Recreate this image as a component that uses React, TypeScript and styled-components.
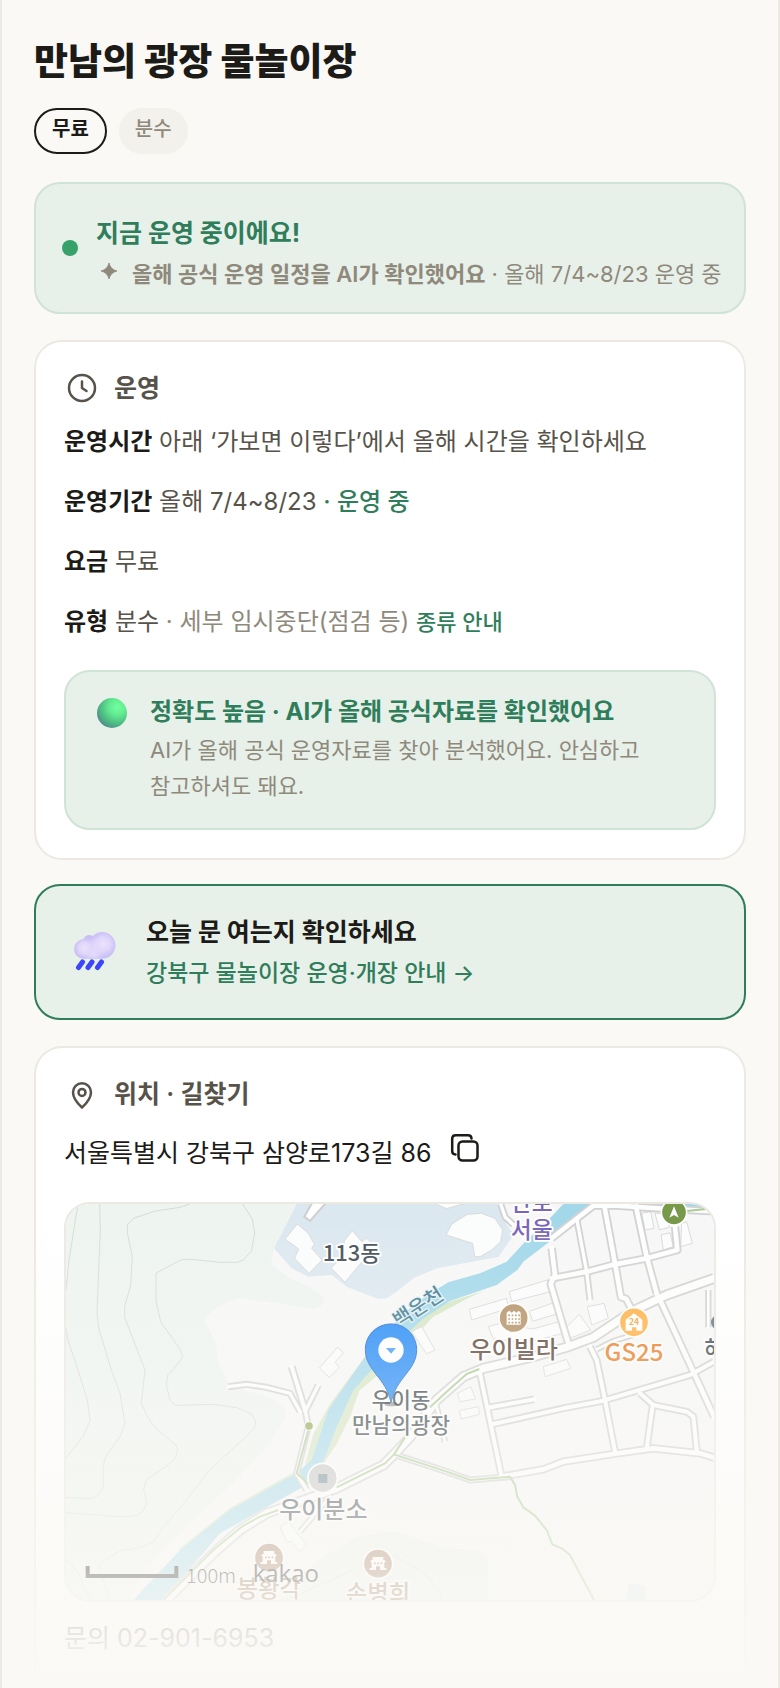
import React from "react";
import styled, { createGlobalStyle, css } from "styled-components";

const color = {
  page: "#faf9f5",
  line: "#ebe9e2",
  card: "#ffffff",
  ink: "#1c1b18",
  body: "#57534a",
  muted: "#8f897c",
  green: "#2f7d5b",
  mint: "#e8f0ea",
  mintLine: "#cfe3d7",
};

const GlobalStyle = createGlobalStyle`
  *, *::before, *::after { box-sizing: border-box; }
  body {
    margin: 0;
    background: ${color.page};
    color: ${color.ink};
    font-family: Inter, "Noto Sans CJK KR", sans-serif;
    font-size: 25px;
    line-height: 40px;
    word-break: keep-all;
  }
  h1, h2, p { margin: 0; font-weight: inherit; font-size: inherit; }
  a { color: inherit; text-decoration: none; }
`;

const Page = styled.main`
  position: relative;
  display: flex;
  flex-direction: column;
  min-height: 100vh;
  padding: 36px 32px 0;
  border: solid ${color.line};
  border-width: 0 2px;
  overflow: hidden;
`;

const Title = styled.h1`
  font-size: 37px;
  font-weight: 800;
  line-height: 52px;
`;

const Tags = styled.div`
  display: flex;
  gap: 12px;
  margin: 20px 0 28px;
`;

const Tag = styled.span<{ $outlined?: boolean }>`
  display: flex;
  align-items: center;
  height: 46px;
  padding: 0 16px 4px;
  border-radius: 23px;
  font-size: 20px;
  font-weight: 500;
  color: ${color.muted};
  background: #f2f1ec;
  ${(p) =>
    p.$outlined &&
    css`
      border: 2px solid ${color.ink};
      background: transparent;
      color: ${color.ink};
      font-weight: 600;
    `}
`;

const panel = css`
  border: 2px solid ${color.mintLine};
  border-radius: 26px;
  background: ${color.mint};
`;

const Status = styled.section`
  ${panel}
  display: flex;
  align-items: center;
  gap: 18px;
  padding: 18px 16px 18px 26px;
`;

const StatusText = styled.div`
  padding-top: 10px;
`;

const StatusDot = styled.span`
  flex: none;
  width: 16px;
  height: 16px;
  border-radius: 50%;
  background: #36a269;
`;

const PanelTitle = styled.h2<{ $tone?: string; $compact?: boolean }>`
  font-size: ${(p) => (p.$compact ? 24 : 25)}px;
  font-weight: 700;
  line-height: ${(p) => (p.$compact ? 36 : 42)}px;
  color: ${(p) => p.$tone ?? color.green};
`;

const Note = styled.p`
  display: flex;
  align-items: center;
  font-size: 22px;
  line-height: 40px;
  color: ${color.muted};

  svg { flex: none; margin: 0 13px 6px 3px; }
  strong { font-weight: 600; }
`;

const Card = styled.section<{ $open?: boolean }>`
  padding: 28px;
  border: 2px solid ${color.line};
  border-radius: 28px;
  background: ${color.card};
  margin-top: 26px;
  ${(p) =>
    p.$open &&
    css`
      flex: 1;
      padding-bottom: 0;
      border-bottom: 0;
      border-radius: 28px 28px 0 0;
    `}
`;

const CardHeading = styled.h2`
  display: flex;
  align-items: center;
  gap: 14px;
  height: 36px;
  margin-bottom: 16px;
  font-weight: 600;
  color: ${color.body};
`;

const Facts = styled.div`
  display: grid;
  gap: 20px;
  font-size: 24px;
  color: ${color.body};
`;

const Fact = styled.p`
  strong { font-weight: 700; color: ${color.ink}; }
  em { font-style: normal; color: ${color.muted}; }
  mark { background: none; color: ${color.green}; font-weight: 500; }
  a { font-size: 22px; font-weight: 500; color: ${color.green}; }
`;

const Callout = styled.div`
  ${panel}
  display: flex;
  gap: 20px;
  margin-top: 28px;
  padding: 22px 28px 24px;

  svg { flex: none; }
`;

const CalloutText = styled.p`
  margin-top: 2px;
  font-size: 22px;
  line-height: 36px;
  color: ${color.muted};
`;

const CheckLink = styled.a`
  ${panel}
  display: flex;
  align-items: center;
  gap: 26px;
  min-height: 136px;
  margin-top: 24px;
  padding: 24px 34px;
  border-color: ${color.green};
`;

const LinkLine = styled.span`
  display: block;
  font-size: 23px;
  font-weight: 500;
  line-height: 40px;
  color: ${color.green};
`;

const Address = styled.div`
  display: flex;
  align-items: flex-start;
  gap: 14px;
  line-height: 50px;
`;

const IconButton = styled.button`
  display: flex;
  align-items: center;
  justify-content: center;
  width: 40px;
  height: 40px;
  padding: 0;
  border: 0;
  background: none;
  color: ${color.ink};
  cursor: pointer;
`;

const MapFrame = styled.div`
  height: 400px;
  margin: 24px 0 16px;
  border: 2px solid ${color.line};
  border-radius: 26px;
  overflow: hidden;

  svg { display: block; width: 100%; height: 100%; }
`;

const Contact = styled.p`
  color: ${color.body};
`;

const Fade = styled.div`
  position: absolute;
  inset: auto -2px 0;
  height: 468px;
  background: linear-gradient(to bottom, rgba(250, 249, 245, 0), ${color.page});
  pointer-events: none;
`;

const Sparkle = () => (
  <svg width="20" height="20" viewBox="0 0 20 20" aria-hidden="true">
    <path
      d="M10 2 Q11.500 8.500 18 10 Q11.500 11.500 10 18 Q8.500 11.500 2 10 Q8.500 8.500 10 2Z"
      fill={color.muted}
      stroke={color.muted}
      strokeWidth="0.800"
    />
  </svg>
);

const stroke = {
  fill: "none",
  stroke: "currentColor",
  strokeWidth: 2.5,
  strokeLinecap: "round",
  strokeLinejoin: "round",
} as const;

const ClockIcon = () => (
  <svg width="36" height="36" viewBox="0 0 36 36" aria-hidden="true" {...stroke}>
    <circle cx="18" cy="18" r="13" />
    <path d="M18 11.5V18l4.5 3" />
  </svg>
);

const PinIcon = () => (
  <svg width="36" height="36" viewBox="0 0 36 36" aria-hidden="true" {...stroke}>
    <path d="M27 16.2c0 5.800-5 11.600-9 15.300-4-3.700-9-9.500-9-15.300a9 9 0 0 1 18 0Z" />
    <circle cx="18" cy="16.400" r="3.500" />
  </svg>
);

const CopyIcon = () => (
  <svg width="30" height="30" viewBox="0 0 30 30" aria-hidden="true" {...stroke}>
    <rect x="8.500" y="8.500" width="19" height="19" rx="4" />
    <path d="M5.500 21.500a3.500 3.500 0 0 1-3.300-3.500V5.500A3.500 3.500 0 0 1 5.700 2.200H18a3.500 3.500 0 0 1 3.500 3.300" />
  </svg>
);

const GreenBall = () => (
  <svg width="36" height="36" viewBox="0 0 36 36" aria-hidden="true">
    <defs>
      <radialGradient id="ball" cx="0.68" cy="0.3" r="0.8">
        <stop offset="0" stopColor="#72ff9f" />
        <stop offset="0.350" stopColor="#62ea90" />
        <stop offset="0.700" stopColor="#4cbb82" />
        <stop offset="1" stopColor="#50858f" />
      </radialGradient>
    </defs>
    <circle cx="18" cy="19" r="15" fill="url(#ball)" />
  </svg>
);

const RainCloud = () => (
  <svg width="50" height="44" viewBox="0 0 50 44" aria-hidden="true">
    <defs>
      <radialGradient id="glow">
        <stop offset="0" stopColor="#ebe3fb" />
        <stop offset="0.500" stopColor="#e2d9fa" stopOpacity="0.900" />
        <stop offset="1" stopColor="#d5cbf8" stopOpacity="0" />
      </radialGradient>
      <clipPath id="cloud">
        <circle cx="19.500" cy="11.500" r="6.500" />
        <circle cx="13.800" cy="19" r="9.800" />
        <circle cx="32.200" cy="15.300" r="13.300" />
        <path d="M13.800 14H32.200V28.700H13.800Z" />
      </clipPath>
    </defs>
    <g clipPath="url(#cloud)">
      <rect width="50" height="30" fill="#c8bff5" />
      <circle cx="23" cy="20" r="13" fill="url(#glow)" />
      <circle cx="14" cy="18" r="11" fill="url(#glow)" />
      <circle cx="33.500" cy="14" r="14" fill="url(#glow)" />
    </g>
    <g stroke="#3d45fb" strokeWidth="5" strokeLinecap="round">
      <path d="M12.500 32 8.500 37.500M22 32 18 37.500M31.500 32 27.500 37.500" />
    </g>
  </svg>
);

const contours = [
  "M36 0 9 168 0 258",
  "M101 0 103 78 93 323 98 373 136 498 162 568 177 660 162 698 120 756 112 783 112 848 92 878 72 885 0 880",
  "M0 373 6 408 36 498 64 588 72 650 52 696 0 762",
  "M372 0 342 10 268 21 202 43 184 63 184 86 199 158 194 243 176 308 176 340 237 498 226 598 247 643 272 676 330 723 335 738 330 760 302 786 242 826 233 853 242 896 232 920 210 934 172 939 0 926",
  "M530 0 559 45 566 88 556 142 532 168 514 175 462 175 377 166 347 167 270 207 270 290 284 353 342 436 351 458 322 496 305 513 301 543 312 588 327 604 442 601 512 611 557 630 569 651 566 671 542 696 434 795 347 906 292 968 262 1013 227 1030 162 1040 97 1081 132 1188",
  "M0 1066 37 1108 72 1188",
  "M982 1053 1077 1108 1122 1163 1127 1188M862 1098 662 1188",
];

const buildings = [
  "694 60 727 88 745 121 737 133 768 168 729 208 686 163 698 135 657 105",
  "859 80 887 113 902 103 930 130 877 186 837 235 795 191 830 160 835 110",
  "1140 93 1157 60 1204 31 1247 28 1287 43 1310 78 1304 113 1277 138 1242 158 1226 158 1220 118",
  "1097 -5 1142 14 1207 -5",
  "1210 316 1322 283 1327 313 1217 348",
  "1330 263 1444 228 1454 263 1337 293",
  "1390 322 1464 296 1472 330 1400 352",
  "1267 368 1304 358 1400 375 1482 352 1492 388 1380 416 1282 404",
  "1540 331 1574 378 1512 403 1502 368",
  "1564 308 1614 298 1627 343 1577 363",
  "1037 383 1067 368 1107 438 1082 450",
  "1432 488 1502 466 1514 493 1437 518",
  "1174 568 1214 548 1229 585 1182 593",
  "1180 620 1237 608 1240 631 1185 645",
  "1727 28 1754 23 1764 73 1737 78",
  "1767 28 1800 28 1810 70 1780 78",
  "1785 93 1812 86 1822 128 1792 138",
  "1847 58 1862 53 1879 118 1844 128",
  "814 430 832 446 807 475 820 490 790 520 760 492",
  "667 953 722 1023 700 1043 677 1013 662 1013 642 968",
];

const roads: { d: string; w: number }[] = [
  { d: "M1304 0 1318 40 1342 62", w: 10 },
  { d: "M1457 103 1582 5 1640 4 1760 12 1944 22", w: 14 },
  { d: "M1532 43 1562 203 1572 288", w: 10 },
  { d: "M1614 0 1647 178 1665 280 1680 284 1696 314", w: 14 },
  { d: "M1710 8 1742 158 1772 268", w: 14 },
  { d: "M1827 68 1834 138 1742 163 1647 181 1562 203 1457 223", w: 14 },
  { d: "M1457 133 1467 213 1454 240 1507 418", w: 14 },
  { d: "M1572 428 1592 468 1617 588 1647 743", w: 12 },
  { d: "M1592 436 1640 412 1704 392", w: 8 },
  { d: "M1242 508 1307 818", w: 12 },
  { d: "M1282 660 1492 613 1612 590 1872 513 1944 473", w: 12 },
  { d: "M1272 610 1404 586", w: 12 },
  { d: "M1307 818 1432 796 1492 773 1642 750 1762 733 1902 748 1944 761", w: 14 },
  { d: "M984 751 1142 803 1212 828 1332 818", w: 10 },
  { d: "M1722 568 1762 603 1862 623 1882 638 1892 738", w: 12 },
  { d: "M1760 603 1742 733", w: 12 },
  { d: "M1782 288 1882 503 1944 638", w: 14 },
  { d: "M1927 258 1927 370", w: 8 },
  { d: "M1112 608 1137 713", w: 8 },
  { d: "M487 548 542 541 602 550 672 568 702 623", w: 10 },
  { d: "M677 488 717 618", w: 12 },
  { d: "M757 543 718 622 727 666 692 808 722 858", w: 10 },
  { d: "M792 878 702 983", w: 8 },
  { d: "M1944 223 1802 273 1702 320 1582 400 1507 428 1402 458 1252 493 1192 518 1112 588 1032 700 987 748 952 783 812 853 602 928 522 978 442 1048 302 1188", w: 22 },
];

const trails = [
  "M1240 495 1202 510 1142 563 1092 610",
  "M1017 700 984 751 957 778 812 850",
  "M637 918 582 938 527 968 442 1038 292 1188",
  "M984 751 1142 803 1212 828 1332 818 1347 843 1354 878 1372 910 1407 935 1442 978 1459 1021 1487 1033 1512 1053 1584 1188",
  "M727 678 692 808 742 853",
  "M1862 21 1920 15",
];

const labels = [
  { t: "113동", x: 857, y: 171, s: 66, c: "#465058" },
  { t: "안토", x: 1397, y: 22, s: 68, c: "#7866b8" },
  { t: "서울", x: 1397, y: 103, s: 68, c: "#7866b8" },
  { t: "우이빌라", x: 1343, y: 461, s: 72, c: "#573f33" },
  { t: "GS25", x: 1704, y: 472, s: 72, c: "#e87a20" },
  { t: "우이동", x: 1005, y: 613, s: 64, c: "#343f47" },
  { t: "만남의광장", x: 1005, y: 686, s: 64, c: "#343f47" },
  { t: "우이분소", x: 772, y: 941, s: 72, c: "#38444c" },
  { t: "봉황각", x: 608, y: 1180, s: 70, c: "#8e6b48" },
  { t: "손병희", x: 936, y: 1194, s: 70, c: "#8e6b48" },
  { t: "해", x: 1947, y: 463, s: 70, c: "#3a4750" },
];

const LocalMap = () => (
  <svg
    viewBox="0 0 1944 1188"
    preserveAspectRatio="xMidYMid slice"
    role="img"
    aria-label="만남의 광장 물놀이장 지도"
    fontFamily='"Noto Sans CJK KR", sans-serif'
  >
    <rect width="1944" height="1188" fill="#f7f7f7" />
    <path
      fill="#eef4f0"
      d="M0 0H690L624 133 614 183 672 223Q768 262 774 288 770 318 720 313L642 298 522 283Q470 290 412 348 447 395 452 440L457 478 492 548 602 578Q657 600 657 628T602 728L502 838 402 928 302 1028 222 1118 192 1188H0Z"
    />
    <path
      fill="#ecf2ed"
      d="M650 1188 742 1078 872 998 982 981 1142 1033 1232 1038Q1267 1048 1267 1088V1188Z"
    />
    <path
      fill="#dce8f0"
      d="M692 0 624 133 677 193 727 218 797 213 842 248 937 285 962 283 992 263 1042 223 1112 193 1297 159 1345 90Q1310 60 1304 0Z"
    />
    <path fill="#dcebf2" d="M1690 1136 1737 1146 1737 1188 1679 1188Z" />
    <g fill="none" stroke="#d6dcd8" strokeWidth="3">
      {contours.map((d) => (
        <path key={d} d={d} />
      ))}
    </g>
    <path
      fill="#d5e6c4"
      d="M712 800 742 690 792 600 897 458 1000 400 1120 302 1252 262 1292 243 1200 286 1100 340 950 500 880 560 852 640 812 720 772 780Z M340 1034 492 912 692 800 692 830 360 1050Z"
    />
    <path
      fill="#a3d8ea"
      d="M1492 0 1442 53 1382 108 1322 173 1242 208 1147 235 1080 275 1000 340 960 390 897 458 787 618 737 768 692 808 492 918 342 1038 202 1188 292 1188 462 988 712 848 742 800 772 773 812 668 862 558 917 498 1000 410 1070 345 1150 292 1292 243 1354 198 1372 173 1457 108 1572 0ZM1772 0 1912 0 1902 12 1780 8Z"
    />
    <g fill="#fbfcfc" stroke="#dadada" strokeWidth="3">
      {buildings.map((points) => (
        <polygon key={points} points={points} />
      ))}
    </g>
    <polygon points="740 -6 782 -6 732 51 715 38" fill="#fff" stroke="#cfcfd2" strokeWidth="6" />
    <g fill="none" strokeLinejoin="round">
      {roads.map((r) => (
        <path key={r.d} d={r.d} stroke="#d2d2d2" strokeWidth={r.w + 11} />
      ))}
      {roads.map((r) => (
        <path key={r.d} d={r.d} stroke="#fefefe" strokeWidth={r.w} strokeLinecap="square" />
      ))}
      {trails.map((d) => (
        <path key={d} d={d} stroke="#abca94" strokeWidth="6" />
      ))}
    </g>
    <circle cx="729" cy="666" r="13" fill="#8ba650" stroke="#fff" strokeWidth="3" />

    <g stroke="#fff" strokeWidth="5">
      <circle cx="1343" cy="342" r="44" fill="#b39064" />
      <circle cx="1704" cy="355" r="44" fill="#ffb043" />
      <circle cx="1824" cy="25" r="38" fill="#78984a" />
      <circle cx="770" cy="822" r="44" fill="#c4c4c6" />
      <circle cx="609" cy="1061" r="44" fill="#a17659" />
      <circle cx="936" cy="1079" r="44" fill="#a17659" />
    </g>
    <circle cx="1957" cy="355" r="22" fill="#63737e" />
    <path d="M1824 7 1838 41 1824 33 1810 41Z" fill="#fff" />
    <path d="M1322 362V326L1330 320 1337 326 1344 320 1351 326 1358 320 1364 326V362Z" fill="#fff" />
    <path
      d="M1327 334H1362M1327 345H1362M1327 356H1362"
      stroke="#b39064"
      strokeWidth="5"
      strokeDasharray="5 5"
    />
    <path d="M1679 380V347L1704 328 1729 347V380H1711V370H1698V380Z" fill="#fff" />
    <text x="1704" y="364" fontSize="26" fontWeight="700" textAnchor="middle" fill="#f2a030">
      24
    </text>
    <rect x="757" y="810" width="27" height="27" fill="#6e8791" />
    {[
      [609, 1061],
      [936, 1079],
    ].map(([x, y]) => (
      <g key={x} transform={`translate(${x} ${y})`}>
        <path
          d="M-24 -8 -16 -12V-20H16V-12L24 -8 19 -3V13H25V19H6V8H-6V19H-25V13H-19V-3Z"
          fill="#fff"
        />
        <path d="M-12 -1H14" stroke="#a17659" strokeWidth="5" strokeDasharray="5 5" />
      </g>
    ))}

    <g textAnchor="middle" fontWeight="500" stroke="#fff" strokeWidth="11" strokeLinejoin="round" paintOrder="stroke">
      {labels.map((l) => (
        <text key={l.t} x={l.x} y={l.y} fontSize={l.s} fill={l.c}>
          {l.t}
        </text>
      ))}
    </g>
    <text
      transform="translate(1057 310) rotate(-33)"
      y="20"
      fontSize="60"
      fontWeight="500"
      textAnchor="middle"
      fill="#3f7a90"
      stroke="#e4f3f8"
      strokeWidth="7"
      paintOrder="stroke"
    >
      백운천
    </text>

    <ellipse cx="975" cy="600" rx="20" ry="7" fill="#000" opacity="0.4" />
    <path
      d="M975 360C1018 360 1052 394 1052 437 1052 500 990 520 975 596 960 520 898 500 898 437 898 394 932 360 975 360Z"
      fill="#1f88f8"
      stroke="#1767c8"
      strokeWidth="3"
    />
    <circle cx="975" cy="438" r="38" fill="#fff" />
    <path d="M960 432H990L975 449Z" fill="#3b9bfa" />

    <path d="M65 1086V1116H331V1086" fill="none" stroke="#000" strokeWidth="12" />
    <text x="360" y="1138" fontSize="60" fontWeight="300" fill="#000">
      100m
    </text>
    <text x="560" y="1133" fontSize="72" fontFamily='"Open Sans", sans-serif' fontWeight="500" fill="#000">
      kakao
    </text>
  </svg>
);

export default function App() {
  return (
    <>
      <GlobalStyle />
      <Page>
        <Title>만남의 광장 물놀이장</Title>
        <Tags>
          <Tag $outlined>무료</Tag>
          <Tag>분수</Tag>
        </Tags>

        <Status>
          <StatusDot />
          <StatusText>
            <PanelTitle>지금 운영 중이에요!</PanelTitle>
            <Note>
              <Sparkle />
              <span>
                <strong>올해 공식 운영 일정을 AI가 확인했어요</strong> · 올해 7/4~8/23 운영 중
              </span>
            </Note>
          </StatusText>
        </Status>

        <Card>
          <CardHeading>
            <ClockIcon />
            운영
          </CardHeading>
          <Facts>
            <Fact>
              <strong>운영시간</strong> 아래 ‘가보면 이렇다’에서 올해 시간을 확인하세요
            </Fact>
            <Fact>
              <strong>운영기간</strong> 올해 7/4~8/23 <mark>· 운영 중</mark>
            </Fact>
            <Fact>
              <strong>요금</strong> 무료
            </Fact>
            <Fact>
              <strong>유형</strong> 분수 <em>· 세부 임시중단(점검 등)</em>{" "}
              <a href="#types">종류 안내</a>
            </Fact>
          </Facts>
          <Callout>
            <GreenBall />
            <div>
              <PanelTitle $compact>정확도 높음 · AI가 올해 공식자료를 확인했어요</PanelTitle>
              <CalloutText>
                AI가 올해 공식 운영자료를 찾아 분석했어요. 안심하고 참고하셔도 돼요.
              </CalloutText>
            </div>
          </Callout>
        </Card>

        <CheckLink href="#today">
          <RainCloud />
          <div>
            <PanelTitle $tone={color.ink}>오늘 문 여는지 확인하세요</PanelTitle>
            <LinkLine>강북구 물놀이장 운영·개장 안내 →</LinkLine>
          </div>
        </CheckLink>

        <Card $open>
          <CardHeading>
            <PinIcon />
            위치 · 길찾기
          </CardHeading>
          <Address>
            <span>서울특별시 강북구 삼양로173길 86</span>
            <IconButton type="button" aria-label="주소 복사">
              <CopyIcon />
            </IconButton>
          </Address>
          <MapFrame>
            <LocalMap />
          </MapFrame>
          <Contact>문의 02-901-6953</Contact>
        </Card>
        <Fade />
      </Page>
    </>
  );
}
